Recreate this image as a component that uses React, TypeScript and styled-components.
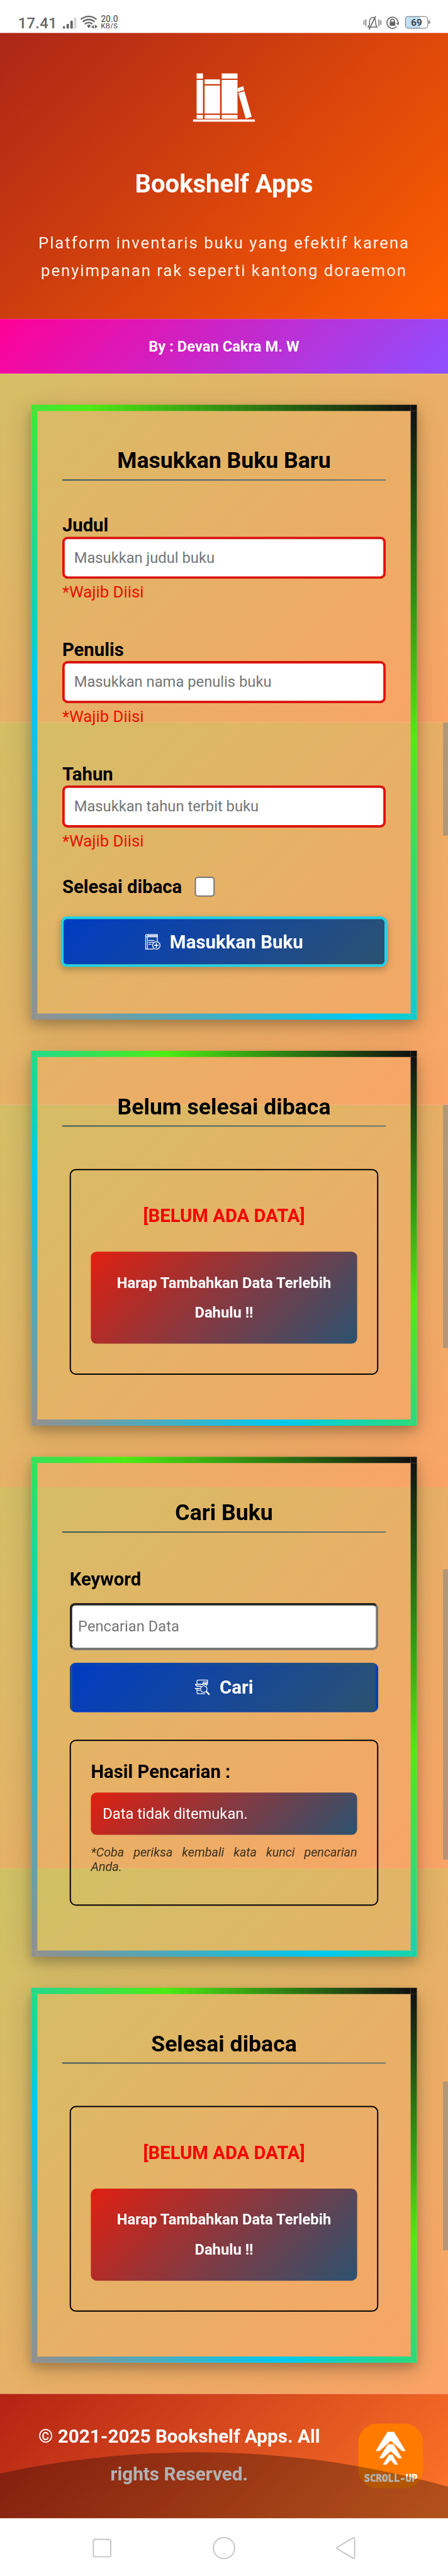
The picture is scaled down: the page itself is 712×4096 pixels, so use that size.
import React from "react";
import styled, { createGlobalStyle } from "styled-components";

const GlobalStyle = createGlobalStyle`
  * { box-sizing: border-box; }
  html, body { margin: 0; padding: 0; background: #fff; overflow: hidden; }
  body, input, button { font-family: Roboto, "Liberation Sans", sans-serif; }
  h1, h2, h3, p { margin: 0; }
`;

/* A slice of the fixed page gradient, starting `offset` px below the viewport top. */
const slice = (offset: number, top: number, height: number) =>
  `linear-gradient(135deg, #c5c866 ${-offset / Math.SQRT2}px, #ffa066 ${
    (2020 - offset) / Math.SQRT2
  }px) 0 ${top}px / 720px ${height}px no-repeat`;

const Viewport = styled.div`
  width: 712px;
  height: 4096px;
  overflow: hidden;
`;

const Page = styled.div`
  width: 720px;
  height: 4143px;
  display: flex;
  flex-direction: column;
  transform: scale(0.98889, 0.98866);
  transform-origin: 0 0;
  color: #000;
`;

const StatusBar = styled.div`
  height: 53px;
  padding: 24px 32px 0 29px;
  display: flex;
  align-items: flex-start;
  justify-content: space-between;
  background: #fff;
  color: #666;
`;

const StatusGroup = styled.div`
  display: flex;
  align-items: flex-start;
`;

const Clock = styled.span`
  width: 72px;
  font-size: 24px;
  line-height: 28px;
  font-weight: 500;
  letter-spacing: 0.3px;
`;

const Speed = styled.span`
  margin: 0 0 0 5px;
  display: flex;
  flex-direction: column;
  font-size: 14px;
  line-height: 12px;
  font-weight: 500;
  small {
    font-size: 11.5px;
    letter-spacing: 0.3px;
  }
`;

const Battery = styled.div`
  position: relative;
  width: 37px;
  height: 20px;
  margin: 2px 0 0 9px;
  border: 1.3px solid #666;
  border-radius: 5px;
  background: linear-gradient(to right, #bfdffa 68%, #fff 68%);
  color: #444;
  font-size: 15.5px;
  line-height: 18px;
  font-weight: 700;
  text-align: center;
  &::after {
    content: "";
    position: absolute;
    right: -4px;
    top: 6px;
    width: 2px;
    height: 5px;
    background: #666;
  }
`;

const Hero = styled.header`
  height: 460px;
  padding-top: 64px;
  display: flex;
  flex-direction: column;
  align-items: center;
  background: linear-gradient(135deg, #ad2618, #ff6000);
  color: #fff;
  text-align: center;
`;

const HeroTitle = styled.h1`
  margin-top: 76px;
  font-size: 40.4px;
  line-height: 48px;
  font-weight: 700;
`;

const HeroText = styled.p`
  margin-top: 49px;
  font-size: 26px;
  line-height: 43.6px;
  letter-spacing: 2px;
  color: #fff3e8;
  white-space: nowrap;
`;

const Byline = styled.div`
  height: 88px;
  background: linear-gradient(135deg, #ff0096, #8e4fff);
  color: #fff;
  font-size: 24px;
  line-height: 88px;
  font-weight: 700;
  text-align: center;
`;

const Main = styled.main`
  position: relative;
  height: 3249px;
  padding: 50px;
  display: flex;
  flex-direction: column;
  gap: 50px;
  background: ${[
    slice(548, 0, 561),
    slice(495, 561, 615),
    slice(495, 1175.5, 615),
    slice(495, 1790, 614),
    slice(330, 2404, 845),
  ].join(", ")};
`;

const ScrollThumb = styled.i<{ $top: number; $height: number }>`
  position: absolute;
  right: 0;
  top: ${(p) => p.$top}px;
  width: 8px;
  height: ${(p) => p.$height}px;
  background: rgba(122, 130, 130, 0.5);
`;

const Card = styled.section<{ $bottom: number }>`
  border: 10px solid;
  border-image: linear-gradient(45deg, #919191, #00c9f0, #4dec14, #111) 1;
  padding: 58px 40px ${(p) => p.$bottom}px;
  display: flex;
  flex-direction: column;
  box-shadow: 0 8px 16px rgba(0, 0, 0, 0.2), 0 12px 40px rgba(0, 0, 0, 0.16);
`;

const CardTitle = styled.h2`
  padding-bottom: 8px;
  border-bottom: 2px solid;
  border-image: linear-gradient(to right, #385560, #667672) 1;
  font-size: 36px;
  line-height: 44px;
  font-weight: 700;
  text-align: center;
`;

const Field = styled.div<{ $top: number }>`
  margin-top: ${(p) => p.$top}px;
  display: flex;
  flex-direction: column;
`;

const Label = styled.label`
  font-size: 29.6px;
  line-height: 34px;
  font-weight: 700;
`;

const TextInput = styled.input`
  height: 68px;
  margin-top: 1px;
  padding: 0 15px;
  border: 4px solid;
  border-color: #d8120e #e80c06;
  border-radius: 9px;
  background: #fff;
  outline: none;
  font-size: 24px;
  &::placeholder { color: #757575; opacity: 1; }
`;

const SearchInput = styled(TextInput)`
  height: 76px;
  margin-top: 21px;
  padding: 0 9.5px;
  border-color: #25241f #767676 #767676 #25241f;
`;

const Required = styled.span`
  margin-top: 6px;
  font-size: 26px;
  line-height: 30px;
  color: #e81000;
`;

const CheckRow = styled.div`
  height: 34px;
  margin-top: 42px;
  display: flex;
  align-items: flex-end;
`;

const Checkbox = styled.input`
  appearance: none;
  width: 32px;
  height: 32px;
  margin: 0 0 1px 21px;
  border: 2px solid #767676;
  border-radius: 5px;
  background: #fff;
`;

const Button = styled.button`
  height: 80px;
  margin: 20px 0 0;
  padding: 0;
  display: flex;
  align-items: center;
  justify-content: center;
  gap: 15px;
  border: 4px solid transparent;
  border-radius: 10px;
  background: linear-gradient(135deg, #003cc2, #2c5270);
  color: #fff;
  font-size: 29.8px;
  line-height: 34px;
  font-weight: 700;
`;

const SubmitButton = styled(Button)`
  height: 81px;
  margin: 31px -2px 0;
  border-color: #18d3f0;
  box-shadow: 0 4px 12px rgba(0, 0, 0, 0.25);
`;

const Panel = styled.div<{ $top: number; $height: number; $pad: number }>`
  height: ${(p) => p.$height}px;
  margin: ${(p) => p.$top}px 12px 0;
  padding: ${(p) => p.$pad}px 32px 0;
  display: flex;
  flex-direction: column;
  border: 2px solid #000;
  border-radius: 10px;
`;

const EmptyHeading = styled.h3`
  font-size: 29.6px;
  line-height: 34px;
  font-weight: 700;
  color: #f40000;
  text-align: center;
`;

const Notice = styled.div`
  border-radius: 9px;
  background: linear-gradient(135deg, #e02010, #2c5270);
  color: #fff;
`;

const EmptyNotice = styled(Notice)`
  margin-top: 41px;
  padding: 26px 34px;
  font-size: 24px;
  line-height: 48px;
  font-weight: 700;
  text-align: center;
`;

const ResultNotice = styled(Notice)`
  margin-top: 17px;
  padding-left: 19px;
  font-size: 24px;
  line-height: 68px;
`;

const Hint = styled.p`
  margin-top: 16.5px;
  font-size: 20px;
  line-height: 23.6px;
  font-style: italic;
  text-align: justify;
  color: #3b2f1c;
`;

const SearchForm = styled.div`
  margin: 58px 12px 0;
  display: flex;
  flex-direction: column;
`;

const Footer = styled.footer`
  position: relative;
  height: 200px;
  overflow: hidden;
  display: flex;
  background: linear-gradient(135deg, #b42314, #ff7628);
  color: #fff;
`;

const Copyright = styled.p`
  width: 576px;
  padding: 39px 50px 0;
  font-size: 30px;
  line-height: 60.4px;
  font-weight: 700;
  text-align: center;
`;

const ScrollUp = styled.div`
  width: 104px;
  height: 104px;
  margin-top: 48px;
  display: flex;
  flex-direction: column;
  align-items: center;
  border-radius: 30px;
  background: #ff7b00;
  font-family: "DejaVu Sans Mono", monospace;
  font-size: 15.8px;
  line-height: 18px;
  font-weight: 700;
  -webkit-text-stroke: 0.7px #fff;
  white-space: nowrap;
`;

const Shade = styled.div`
  position: absolute;
  left: -1178px;
  top: 94px;
  width: 2990px;
  height: 2990px;
  border-radius: 50%;
  background: rgba(0, 0, 0, 0.3);
`;

const NavBar = styled.nav`
  height: 93px;
  padding: 29px 147px 0;
  display: flex;
  justify-content: space-between;
  align-items: flex-start;
  border-top: 1px solid #f6dcd2;
  background: #fff;
`;

const BooksIcon = () => (
  <svg width="100" height="80" viewBox="310 117 100 80" fill="#fff">
    <path d="M316 118h10.2v8.5H316zM316 128.5h10.2v54H316zM316 184.8h10.2v6H316z" />
    <path d="M328.8 127.7h24.8v7.5h-24.8zM328.8 137.5h24.8v45h-24.8zM328.8 184.8h24.8v6h-24.8z" />
    <path d="M356.3 118h25.4v8.5h-25.4zM356.3 128.5h25.4v54h-25.4zM356.3 184.8h25.4v6h-25.4z" />
    <path d="M382 141.8l9-3.2 1.4 6-9 3.4-1.4-1zM383 149.8l9.8-3.2 11.8 41.2-9.6 3.2z" />
    <path d="M310 192.2h99.8v3.6H310z" />
  </svg>
);

const SignalIcon = () => (
  <svg width="22" height="24" viewBox="101 24 22 24" fill="#666">
    <rect x="101" y="42" width="3.6" height="4" rx="1" />
    <rect x="107" y="38.5" width="3.8" height="7.5" rx="1" />
    <rect x="113" y="33.5" width="4" height="12.5" rx="1" />
    <rect x="119" y="28.3" width="3.8" height="17.7" rx="1" fill="#d2d2d2" />
  </svg>
);

const WifiSvg = styled.svg`
  margin-left: 6px;
`;

const WifiIcon = () => (
  <WifiSvg width="28" height="24" viewBox="129 24 28 24" fill="none" stroke="#666" strokeWidth="2.4">
    <path d="M129.8 31.2Q142.5 21.6 155.2 31.2" />
    <path d="M133 35Q142.5 27.6 152 35" />
    <path d="M136.3 38.8Q142.5 33.8 148.7 38.8" />
    <path d="M139.5 41l3.4-1.6 3.4 1.6-3.4 4.2zM151 40v6.4l-4.4-3zM152.6 39.4l4.2 3.3-4.2 3.3z" fill="#666" stroke="none" />
  </WifiSvg>
);

const MuteIcon = () => (
  <svg width="30" height="26" viewBox="582 24 30 26" fill="none" stroke="#666" strokeWidth="1.5">
    <path d="M582.8 32.5v7.5M586 31v11M607 31v11M610.2 32.5v7.5" />
    <path d="M589.6 43.6h14.4c-2.6-2.4-2-5-2.4-9-.3-4-2-6.6-4.8-6.600s-4.5 2.6-4.8 6.600c-.4 4 .2 6.600-2.400 9z" />
    <path d="M601.6 26l-10.4 21.5" strokeWidth="1.8" />
  </svg>
);

const LockSvg = styled.svg`
  margin-left: 6px;
`;

const LockIcon = () => (
  <LockSvg width="22" height="24" viewBox="618 25 22 24" fill="none" stroke="#666" strokeWidth="1.7">
    <path d="M635.5 43.7a9 9 0 1 1 2.3-4.7" />
    <path d="M634.6 37.8h4.9l-1.5 4.2z" fill="#666" stroke="none" />
    <rect x="624.3" y="36" width="9" height="6.5" rx="1" fill="#666" stroke="none" />
    <path d="M626 36.5v-2a2.8 2.8 0 0 1 5.6 0v2" />
  </LockSvg>
);

const AddBookIcon = () => (
  <svg width="25" height="26" viewBox="0 0 25 26" fill="none" stroke="#fff" strokeWidth="1.3">
    <path d="M20.5 1H3Q1 1 1 3v21.5h12.5M1.3 4.7h18.5v8M3.8 4.7v19.5M20.5 1q-1.8 1.8 0 3.7" />
    <path d="M5.5 10.5h10M5.5 13.5h8M5.5 16.5h5M3 2.8h16" />
    <circle cx="18.2" cy="18.5" r="6" />
    <path d="M18.2 14.8v7.4M14.5 18.5h7.4" strokeWidth="1.6" />
  </svg>
);

const SearchBookIcon = () => (
  <svg width="25" height="26" viewBox="0 0 25 26" fill="none" stroke="#fff" strokeWidth="1.3">
    <path d="M20.5 1H6Q3.5 1 3.5 3.5v4.3h17zM12.5 4h8M12.5 6h8" />
    <path d="M0.5 8h18.5v2.5M0.5 8.5q3 .5 3 3M3.5 11h7M0.5 14.5h8M0 15h7M3.5 17.5h5M3.5 16v4.5q0 2.5 3 2.5h10" />
    <circle cx="14.5" cy="15.5" r="5.2" />
    <path d="M18.5 19.5l5 5" strokeWidth="2.6" />
  </svg>
);

const ChevronsIcon = () => (
  <svg width="104" height="79" viewBox="0 0 104 79" fill="#fff">
    <path d="M46.7 13h10.5L76 44h-6L52 27.5 34 44h-6.2z" />
    <path d="M47.3 33h9.2L70 55.7h-5.6L52 44.5 39.4 55.7h-6z" />
    <path d="M49 50h6l8.7 16h-5.2L52 58.5 44.7 66h-5.4z" />
  </svg>
);

const RequiredField = ({ label, hint, top }: { label: string; hint: string; top: number }) => (
  <Field $top={top}>
    <Label>{label}</Label>
    <TextInput placeholder={hint} />
    <Required>*Wajib Diisi</Required>
  </Field>
);

const EmptyShelf = ({ title }: { title: string }) => (
  <Card $bottom={72}>
    <CardTitle>{title}</CardTitle>
    <Panel $top={68} $height={331} $pad={56}>
      <EmptyHeading>[BELUM ADA DATA]</EmptyHeading>
      <EmptyNotice>Harap Tambahkan Data Terlebih Dahulu !!</EmptyNotice>
    </Panel>
  </Card>
);

export default function App() {
  return (
    <Viewport>
      <GlobalStyle />
      <Page>
        <StatusBar>
          <StatusGroup>
            <Clock>17.41</Clock>
            <SignalIcon />
            <WifiIcon />
            <Speed>
              20.0<small>KB/S</small>
            </Speed>
          </StatusGroup>
          <StatusGroup>
            <MuteIcon />
            <LockIcon />
            <Battery>69</Battery>
          </StatusGroup>
        </StatusBar>

        <Hero>
          <BooksIcon />
          <HeroTitle>Bookshelf Apps</HeroTitle>
          <HeroText>
            Platform inventaris buku yang efektif karena
            <br />
            penyimpanan rak seperti kantong doraemon
          </HeroText>
        </Hero>
        <Byline>By : Devan Cakra M. W</Byline>

        <Main>
          <Card $bottom={75}>
            <CardTitle>Masukkan Buku Baru</CardTitle>
            <RequiredField top={55} label="Judul" hint="Masukkan judul buku" />
            <RequiredField top={61} label="Penulis" hint="Masukkan nama penulis buku" />
            <RequiredField top={61} label="Tahun" hint="Masukkan tahun terbit buku" />
            <CheckRow>
              <Label>Selesai dibaca</Label>
              <Checkbox type="checkbox" />
            </CheckRow>
            <SubmitButton>
              <AddBookIcon />
              Masukkan Buku
            </SubmitButton>
          </Card>

          <EmptyShelf title="Belum selesai dibaca" />

          <Card $bottom={72}>
            <CardTitle>Cari Buku</CardTitle>
            <SearchForm>
              <Label>Keyword</Label>
              <SearchInput placeholder="Pencarian Data" />
              <Button>
                <SearchBookIcon />
                Cari
              </Button>
            </SearchForm>
            <Panel $top={44} $height={267} $pad={32}>
              <Label as="h3">Hasil Pencarian :</Label>
              <ResultNotice>Data tidak ditemukan.</ResultNotice>
              <Hint>*Coba periksa kembali kata kunci pencarian Anda.</Hint>
            </Panel>
          </Card>

          <EmptyShelf title="Selesai dibaca" />

          <ScrollThumb $top={561} $height={182} />
          <ScrollThumb $top={1175.5} $height={391.5} />
          <ScrollThumb $top={1923} $height={467} />
          <ScrollThumb $top={2746.5} $height={271} />
        </Main>

        <Footer>
          <Copyright>© 2021-2025 Bookshelf Apps. All rights Reserved.</Copyright>
          <ScrollUp>
            <ChevronsIcon />
            SCROLL-UP
          </ScrollUp>
          <Shade />
        </Footer>

        <NavBar>
          <svg width="34" height="36" fill="none" stroke="#c6c6c6" strokeWidth="2">
            <rect x="3" y="4" width="28" height="28" rx="3" />
          </svg>
          <svg width="38" height="38" fill="none" stroke="#c6c6c6" strokeWidth="2">
            <circle cx="19" cy="18" r="17" />
          </svg>
          <svg width="34" height="38" fill="none" stroke="#c6c6c6" strokeWidth="2" strokeLinejoin="round">
            <path d="M3.5 16.5L28 1.8Q31 .8 31 4v28q0 3.2-3 2.2L3.5 19.5q-1.8-1.5 0-3z" />
          </svg>
        </NavBar>
      </Page>
    </Viewport>
  );
}
